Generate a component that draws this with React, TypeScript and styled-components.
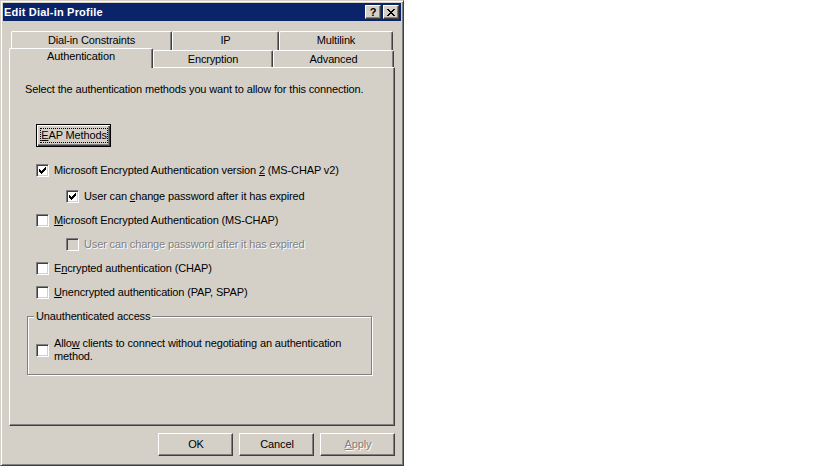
import React from 'react'
import styled, { createGlobalStyle } from 'styled-components'

const face = '#D4D0C8'
const shadow = '#808080'
const dark = '#404040'

const GlobalStyle = createGlobalStyle`
  html, body {
    margin: 0;
    padding: 0;
    background: #fff;
  }
  body {
    font-family: 'Liberation Sans', Arial, sans-serif;
    font-size: 11px;
    letter-spacing: -0.14px;
    color: #000;
  }
`

const Window = styled.div`
  box-sizing: border-box;
  width: 404px;
  height: 466px;
  background: ${face};
  border: 1px solid;
  border-color: ${face} ${dark} ${dark} ${face};
  box-shadow: inset 1px 1px 0 #fff, inset -1px -1px 0 ${shadow};
  padding: 2px;
  display: flex;
  flex-direction: column;
`

const TitleBar = styled.div`
  height: 18px;
  background: #0a246a;
  display: flex;
  align-items: center;
  padding: 0 2px 0 1px;
`

const Title = styled.span`
  flex: 1;
  color: #fff;
  font-weight: bold;
  font-size: 11px;
  letter-spacing: 0.2px;
  line-height: 13px;
`

const TitleButton = styled.div<{ $gap?: boolean }>`
  box-sizing: border-box;
  width: 16px;
  height: 14px;
  margin-right: ${(p) => (p.$gap ? 2 : 0)}px;
  background: ${face};
  border: 1px solid;
  border-color: #fff ${dark} ${dark} #fff;
  box-shadow: inset -1px -1px 0 ${shadow};
  display: flex;
  align-items: center;
  justify-content: center;
  font-weight: bold;
  font-size: 11px;
  line-height: 11px;
`

const Body = styled.div`
  flex: 1;
  display: flex;
  flex-direction: column;
  padding: 10px 6px 0;
`

const TabRow = styled.div<{ $indent: number; $height: number }>`
  display: flex;
  align-items: flex-start;
  height: ${(p) => p.$height}px;
  padding-left: ${(p) => p.$indent}px;
`

const Tab = styled.div<{ $w: number; $h: number; $active?: boolean }>`
  box-sizing: border-box;
  position: relative;
  z-index: ${(p) => (p.$active ? 2 : 0)};
  width: ${(p) => p.$w}px;
  height: ${(p) => p.$h}px;
  margin-top: ${(p) => (p.$active ? -2 : 0)}px;
  margin-bottom: ${(p) => (p.$active ? -1 : 0)}px;
  background: ${face};
  border-left: 1px solid #fff;
  border-top: 1px solid #fff;
  border-right: 1px solid ${dark};
  border-top-left-radius: 2px;
  border-top-right-radius: 2px;
  box-shadow: inset -1px 0 0 ${shadow};
  display: flex;
  justify-content: center;
  padding-top: ${(p) => (p.$active ? 1 : 2)}px;
  line-height: 13px;
  white-space: nowrap;
`

const Panel = styled.div`
  box-sizing: border-box;
  height: 359px;
  border: 1px solid;
  border-color: #fff ${dark} ${dark} #fff;
  box-shadow: inset -1px -1px 0 ${shadow};
  padding: 15px 0 0 15px;
  display: flex;
  flex-direction: column;
  align-items: flex-start;
`

const Intro = styled.div`
  line-height: 13px;
`

const PushButton = styled.button<{ $default?: boolean }>`
  box-sizing: border-box;
  width: 75px;
  height: 23px;
  padding: 0;
  margin: 0;
  background: ${face};
  font: inherit;
  letter-spacing: inherit;
  color: #000;
  display: flex;
  align-items: stretch;
  border: 1px solid;
  border-color: ${(p) => (p.$default ? '#000' : `#fff ${dark} ${dark} #fff`)};
  box-shadow: ${(p) =>
    p.$default
      ? `inset 1px 1px 0 #fff, inset -1px -1px 0 ${dark}, inset -2px -2px 0 ${shadow}`
      : `inset -1px -1px 0 ${shadow}`};
  &:disabled {
    color: ${shadow};
    text-shadow: 1px 1px 0 #fff;
  }
`

const ButtonFace = styled.span<{ $focus?: boolean }>`
  flex: 1;
  margin: 3px 2px 3px 3px;
  border: 1px ${(p) => (p.$focus ? 'dotted #000' : 'solid transparent')};
  display: flex;
  align-items: center;
  justify-content: center;
  line-height: 13px;
  white-space: nowrap;
`

const EapButton = styled(PushButton)`
  margin: 28px 0 0 11px;
`

const CheckRow = styled.div<{ $indent: number; $top: number; $disabled?: boolean }>`
  display: flex;
  align-items: center;
  gap: 5px;
  margin: ${(p) => p.$top}px 0 0 ${(p) => p.$indent}px;
  line-height: 13px;
  color: ${(p) => (p.$disabled ? shadow : '#000')};
  text-shadow: ${(p) => (p.$disabled ? '1px 1px 0 #fff' : 'none')};
`

const Box = styled.span<{ $disabled?: boolean }>`
  box-sizing: border-box;
  flex: none;
  width: 13px;
  height: 13px;
  background: ${(p) => (p.$disabled ? face : '#fff')};
  border: 1px solid;
  border-color: ${shadow} #fff #fff ${shadow};
  box-shadow: inset 1px 1px 0 ${dark}, inset -1px -1px 0 ${face};
  display: flex;
  align-items: center;
  justify-content: center;
`

const Group = styled.fieldset`
  box-sizing: border-box;
  width: 345px;
  margin: 11px 0 0 2px;
  padding: 14px 0 11px;
  border: 1px solid ${shadow};
  box-shadow: inset 1px 1px 0 #fff, 1px 1px 0 #fff;
  min-inline-size: 0;
`

const Legend = styled.legend`
  margin-left: 6px;
  padding: 0 2px;
  line-height: 13px;
  background: ${face};
`

const WrapText = styled.span`
  width: 296px;
`

const Footer = styled.div`
  display: flex;
  justify-content: flex-end;
  gap: 6px;
  margin-top: 7px;
`

const CheckMark = () => (
  <svg width='7' height='7' viewBox='0 0 7 7' shapeRendering='crispEdges'>
    <path
      d='M0 2h1v3H0z M1 3h1v3H1z M2 4h1v3H2z M3 3h1v3H3z M4 2h1v3H4z M5 1h1v3H5z M6 0h1v3H6z'
      fill='#000'
    />
  </svg>
)

const CloseGlyph = () => (
  <svg width='8' height='7' viewBox='0 0 8 7' shapeRendering='crispEdges'>
    <path
      d='M0 0h2v1H0z M6 0h2v1H6z M1 1h2v1H1z M5 1h2v1H5z M2 2h4v1H2z M3 3h2v1H3z M2 4h4v1H2z M1 5h2v1H1z M5 5h2v1H5z M0 6h2v1H0z M6 6h2v1H6z'
      fill='#000'
    />
  </svg>
)

interface CheckProps {
  checked?: boolean
  disabled?: boolean
  indent: number
  top: number
  children: React.ReactNode
}

const Check: React.FC<CheckProps> = ({ checked, disabled, indent, top, children }) => (
  <CheckRow $indent={indent} $top={top} $disabled={disabled}>
    <Box $disabled={disabled}>{checked && <CheckMark />}</Box>
    <span>{children}</span>
  </CheckRow>
)

const backTabs = [
  { label: 'Dial-in Constraints', w: 161 },
  { label: 'IP', w: 107 },
  { label: 'Multilink', w: 114 },
]

const frontTabs = [
  { label: 'Authentication', w: 144, active: true },
  { label: 'Encryption', w: 120 },
  { label: 'Advanced', w: 121 },
]

export default function App() {
  return (
    <>
      <GlobalStyle />
      <Window>
        <TitleBar>
          <Title>Edit Dial-in Profile</Title>
          <TitleButton $gap>?</TitleButton>
          <TitleButton>
            <CloseGlyph />
          </TitleButton>
        </TitleBar>
        <Body>
          <TabRow $indent={2} $height={19}>
            {backTabs.map((t) => (
              <Tab key={t.label} $w={t.w} $h={19}>
                {t.label}
              </Tab>
            ))}
          </TabRow>
          <TabRow $indent={0} $height={17}>
            {frontTabs.map((t) => (
              <Tab key={t.label} $w={t.w} $h={t.active ? 20 : 17} $active={t.active}>
                {t.label}
              </Tab>
            ))}
          </TabRow>
          <Panel>
            <Intro>Select the authentication methods you want to allow for this connection.</Intro>
            <EapButton $default>
              <ButtonFace $focus>
                <span>
                  <u>E</u>AP Methods
                </span>
              </ButtonFace>
            </EapButton>
            <Check checked indent={11} top={17}>
              Microsoft Encrypted Authentication version <u>2</u> (MS-CHAP v2)
            </Check>
            <Check checked indent={41} top={13}>
              User can <u>c</u>hange password after it has expired
            </Check>
            <Check indent={11} top={11}>
              <u>M</u>icrosoft Encrypted Authentication (MS-CHAP)
            </Check>
            <Check disabled indent={41} top={11}>
              User can change password after it has expired
            </Check>
            <Check indent={11} top={11}>
              E<u>n</u>crypted authentication (CHAP)
            </Check>
            <Check indent={11} top={11}>
              <u>U</u>nencrypted authentication (PAP, SPAP)
            </Check>
            <Group>
              <Legend>Unauthenticated access</Legend>
              <CheckRow $indent={8} $top={0}>
                <Box />
                <WrapText>
                  Allo<u>w</u> clients to connect without negotiating an authentication method.
                </WrapText>
              </CheckRow>
            </Group>
          </Panel>
          <Footer>
            <PushButton>
              <ButtonFace>OK</ButtonFace>
            </PushButton>
            <PushButton>
              <ButtonFace>Cancel</ButtonFace>
            </PushButton>
            <PushButton disabled>
              <ButtonFace>
                <span>
                  <u>A</u>pply
                </span>
              </ButtonFace>
            </PushButton>
          </Footer>
        </Body>
      </Window>
    </>
  )
}
